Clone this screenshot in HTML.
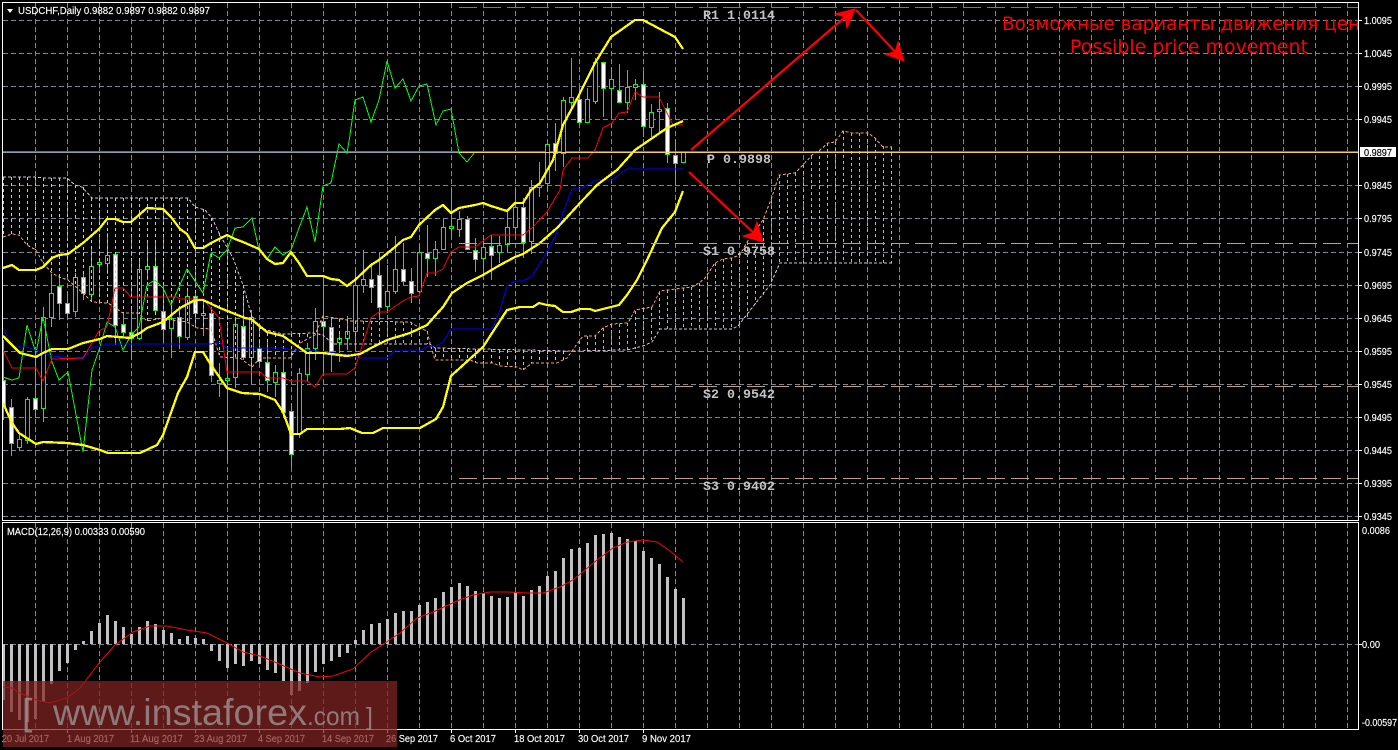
<!DOCTYPE html>
<html lang="en"><head><meta charset="utf-8"><title>USDCHF Daily</title>
<style>
html,body{margin:0;padding:0;background:#000;width:1398px;height:750px;overflow:hidden}
svg{display:block}
text{font-family:"Liberation Sans",sans-serif;font-size:10.5px;fill:#fff;stroke:#fff;stroke-width:.15}
.piv{font-family:"Liberation Mono",monospace;font-size:13.33px;font-weight:bold;fill:#c4c4c4;stroke:none}
.big{font-family:"DejaVu Sans","Noto Sans CJK SC",sans-serif;font-size:18.9px;fill:#f00;stroke:none}
.wm{fill:#9c9292;opacity:.8;stroke:none}
</style></head><body>
<svg width="1398" height="750" viewBox="0 0 1398 750" xmlns="http://www.w3.org/2000/svg">
<defs>
<clipPath id="m"><rect x="3" y="3" width="1355" height="517"/></clipPath>
<clipPath id="t"><rect x="900" y="3" width="458" height="100"/></clipPath>
</defs>
<rect width="1398" height="750" fill="#000"/>

<!-- grid -->
<g stroke="#778899" stroke-width="1" fill="none" stroke-dasharray="5 3" shape-rendering="crispEdges">
<path d="M3 20.5H1358M3 53.5H1358M3 86.5H1358M3 119.5H1358M3 185.5H1358M3 218.5H1358M3 252.5H1358M3 285.5H1358M3 318.5H1358M3 351.5H1358M3 384.5H1358M3 417.5H1358M3 450.5H1358M3 483.5H1358M3 516.5H1358M3 644.5H1358"/>
<path d="M35.5 3V520M67.5 3V520M99.5 3V520M131.5 3V520M163.5 3V520M195.5 3V520M227.5 3V520M259.5 3V520M291.5 3V520M323.5 3V520M355.5 3V520M387.5 3V520M419.5 3V520M451.5 3V520M483.5 3V520M515.5 3V520M547.5 3V520M579.5 3V520M611.5 3V520M643.5 3V520M675.5 3V520M707.5 3V520M739.5 3V520M771.5 3V520M803.5 3V520M835.5 3V520M867.5 3V520M899.5 3V520M931.5 3V520M963.5 3V520M995.5 3V520M1027.5 3V520M1059.5 3V520M1091.5 3V520M1123.5 3V520M1155.5 3V520M1187.5 3V520M1219.5 3V520M1251.5 3V520M1283.5 3V520M1315.5 3V520M1347.5 3V520"/>
<path d="M35.5 523V729M67.5 523V729M99.5 523V729M131.5 523V729M163.5 523V729M195.5 523V729M227.5 523V729M259.5 523V729M291.5 523V729M323.5 523V729M355.5 523V729M387.5 523V729M419.5 523V729M451.5 523V729M483.5 523V729M515.5 523V729M547.5 523V729M579.5 523V729M611.5 523V729M643.5 523V729M675.5 523V729M707.5 523V729M739.5 523V729M771.5 523V729M803.5 523V729M835.5 523V729M867.5 523V729M899.5 523V729M931.5 523V729M963.5 523V729M995.5 523V729M1027.5 523V729M1059.5 523V729M1091.5 523V729M1123.5 523V729M1155.5 523V729M1187.5 523V729M1219.5 523V729M1251.5 523V729M1283.5 523V729M1315.5 523V729M1347.5 523V729"/>
</g>
<path d="M3 151.5H1358" stroke="#5f6f80" shape-rendering="crispEdges"/>
<path d="M3 152.5H459" stroke="#8c9bad" shape-rendering="crispEdges"/>

<g clip-path="url(#m)" shape-rendering="crispEdges">
<!-- wicks -->
<path stroke="#0f0" fill="none" d="M3.5 340V420M11.5 399V456M19.5 433V450M27.5 397V444M35.5 350V418M43.5 307V422M51.5 274V327M59.5 274V320M67.5 291V318M75.5 273V317M83.5 274V300M91.5 249V302M99.5 258V268M107.5 233V274M115.5 254V345M123.5 313V338M131.5 307V360M139.5 258V340M147.5 240V280M155.5 240V312M163.5 297V343M171.5 305V358M179.5 310V349M187.5 290V340M195.5 290V320M203.5 300V336M211.5 307V382M219.5 363V397M227.5 357V462M235.5 317V388M243.5 295V360M251.5 310V384M259.5 340V367M267.5 340V392M275.5 365V397M283.5 352V418M291.5 403V467M299.5 368V438M307.5 343V382M315.5 308V360M323.5 277V372M331.5 317V372M339.5 333V362M347.5 316V350M355.5 272V350M363.5 250V293M371.5 263V303M379.5 253V320M387.5 265V313M395.5 236V294M403.5 243V285M411.5 268V303M419.5 245V294M427.5 225V277M435.5 241V276M443.5 218V250M451.5 188V238M459.5 211V237M467.5 216V250M475.5 238V272M483.5 238V275M491.5 235V280M499.5 236V263M507.5 212V252M515.5 188V235M523.5 198V258M531.5 180V254M539.5 162V197M547.5 144V191M555.5 123V171M563.5 97V167M571.5 58V107M579.5 87V123M587.5 88V123M595.5 58V104M603.5 62V117M611.5 67V118M619.5 64V103M627.5 70V113M635.5 79V100M643.5 72V137M651.5 104V137M659.5 92V133M667.5 103V163M675.5 140V185M683.5 152V162"/>
<!-- up candles -->
<path stroke="#0f0" fill="#000" d="M17.5 439.5h4v8h-4zM25.5 399.5h4v41h-4zM41.5 317.5h4v91h-4zM49.5 293.5h4v24h-4zM73.5 277.5h4v34h-4zM89.5 266.5h4v28h-4zM97.5 262.5h4v2h-4zM105.5 255.5h4v8h-4zM137.5 269.5h4v69h-4zM145.5 266.5h4v3h-4zM169.5 318.5h4v10h-4zM185.5 296.5h4v41h-4zM201.5 313.5h4v2h-4zM217.5 380.5h4v3h-4zM225.5 378.5h4v2h-4zM233.5 324.5h4v53h-4zM249.5 317.5h4v40h-4zM273.5 372.5h4v10h-4zM297.5 373.5h4v60h-4zM305.5 348.5h4v26h-4zM313.5 321.5h4v27h-4zM337.5 338.5h4v4h-4zM345.5 331.5h4v7h-4zM353.5 285.5h4v46h-4zM361.5 279.5h4v6h-4zM385.5 291.5h4v15h-4zM393.5 269.5h4v22h-4zM417.5 252.5h4v39h-4zM433.5 249.5h4v9h-4zM441.5 227.5h4v22h-4zM449.5 226.5h4v2h-4zM457.5 219.5h4v10h-4zM481.5 247.5h4v11h-4zM497.5 245.5h4v7h-4zM505.5 227.5h4v17h-4zM513.5 207.5h4v20h-4zM529.5 187.5h4v54h-4zM537.5 185.5h4v2h-4zM545.5 144.5h4v39h-4zM561.5 100.5h4v53h-4zM569.5 97.5h4v5h-4zM585.5 99.5h4v23h-4zM593.5 62.5h4v39h-4zM609.5 79.5h4v9h-4zM625.5 87.5h4v15h-4zM633.5 84.5h4v3h-4zM649.5 112.5h4v15h-4zM657.5 109.5h4v2h-4zM681.5 152.5h4v10h-4z"/>
<!-- down candles -->
<path stroke="#0f0" fill="#fff" d="M1.5 380.5h4v27h-4zM9.5 407.5h4v36h-4zM33.5 398.5h4v11h-4zM57.5 286.5h4v17h-4zM65.5 303.5h4v10h-4zM81.5 277.5h4v16h-4zM113.5 254.5h4v71h-4zM121.5 324.5h4v8h-4zM129.5 332.5h4v6h-4zM153.5 266.5h4v44h-4zM161.5 311.5h4v18h-4zM177.5 317.5h4v19h-4zM193.5 296.5h4v17h-4zM209.5 313.5h4v62h-4zM241.5 326.5h4v31h-4zM257.5 348.5h4v13h-4zM265.5 362.5h4v18h-4zM281.5 372.5h4v40h-4zM289.5 411.5h4v43h-4zM321.5 321.5h4v5h-4zM329.5 327.5h4v24h-4zM369.5 279.5h4v8h-4zM377.5 275.5h4v32h-4zM401.5 269.5h4v12h-4zM409.5 281.5h4v12h-4zM425.5 253.5h4v5h-4zM465.5 219.5h4v30h-4zM473.5 250.5h4v9h-4zM489.5 246.5h4v9h-4zM521.5 207.5h4v35h-4zM553.5 143.5h4v10h-4zM577.5 99.5h4v23h-4zM601.5 62.5h4v26h-4zM617.5 90.5h4v12h-4zM641.5 84.5h4v42h-4zM665.5 108.5h4v46h-4zM673.5 155.5h4v8h-4z"/>

<!-- cloud verticals -->
<path fill="none" stroke="#d8bfd8" stroke-dasharray="3 3" d="M3.5 177V237M11.5 177V234M19.5 177V235M27.5 177V245M35.5 177V250M43.5 178V263M51.5 178V272M59.5 178V277M67.5 178V279M75.5 185V285M83.5 187V293M91.5 198V302M99.5 198V303M107.5 198V303M115.5 198V308M123.5 198V313M131.5 198V313M139.5 198V314M147.5 198V321M155.5 198V320M163.5 198V318M171.5 198V320M179.5 198V321M187.5 198V322M195.5 206V327M203.5 209V329M211.5 218V329M219.5 233V355M227.5 250V357M235.5 270V358M243.5 285V358M251.5 315V366M259.5 328V358M267.5 333V358M275.5 334V358M283.5 334V358M291.5 334V358M299.5 334V345M307.5 334V339M435.5 348V360M443.5 348V360M451.5 349V360M459.5 349V360M467.5 349V361M475.5 349V363M483.5 349V363M491.5 349V363M499.5 350V366M507.5 350V367M515.5 350V367M523.5 350V370M531.5 350V363M539.5 351V363M547.5 351V363M555.5 351V363M563.5 351V360"/>
<path fill="none" stroke="#f4a460" stroke-dasharray="3 3" d="M323.5 316V336M331.5 317V342M339.5 319V344M347.5 320V344M355.5 321V344M363.5 321V344M371.5 321V344M379.5 322V344M387.5 322V344M395.5 322V344M403.5 322V344M411.5 322V344M419.5 327V344M427.5 331V344M579.5 341V351M587.5 336V351M595.5 336V351M603.5 328V351M611.5 324V351M619.5 324V350M627.5 323V350M635.5 311V349M643.5 309V346M651.5 307V342M659.5 292V330M667.5 290V329M675.5 289V329M683.5 288V329M691.5 287V329M699.5 283V329M707.5 276V329M715.5 263V329M723.5 259V329M731.5 258V329M739.5 255V327M747.5 242V320M755.5 231V304M763.5 220V296M771.5 200V285M779.5 175V265M787.5 174V263M795.5 173V263M803.5 165V263M811.5 156V263M819.5 150V263M827.5 143V263M835.5 142V263M843.5 131V263M851.5 133V263M859.5 133V263M867.5 133V263M875.5 138V263M883.5 146V263M891.5 147V263"/>
<!-- Senkou B -->
<polyline fill="none" stroke="#d8bfd8" stroke-dasharray="3 2" points="3,177 35,177 43,178 67,178 75,185 82,187 92,198 188,198 195,207 205,210 212,218 220,235 233,258 243,285 252,317 259,328 283,334 313,333 323,335 333,344 430,344 435,348 570,351 627,350 643,346 652,342 660,329 732,329 738,326 755,304 770,285 780,263 892,263"/>
<!-- Senkou A -->
<polyline fill="none" stroke="#f4a460" stroke-dasharray="3 2" points="3,237 12,234 19,235 27,245 36,250 43,263 52,273 59,277 68,280 83,293 92,302 108,303 123,313 138,313 147,321 163,318 171,320 187,322 197,328 211,329 220,357 240,358 252,367 260,358 290,358 300,343 315,335 323,316 347,320 350,321 410,322 420,328 427,331 430,343 435,360 470,360 477,363 493,363 500,366 517,367 523,370 532,363 557,363 567,358 580,340 583,336 595,336 603,328 612,324 628,323 635,310 652,307 660,291 683,288 692,287 699,283 705,278 715,263 723,259 732,258 740,255 747,242 763,220 772,197 779,175 795,173 803,165 812,155 820,150 828,143 835,142 843,131 852,133 868,133 875,138 883,147 892,147"/>

<!-- Chikou -->
<polyline fill="none" stroke="#0f0" stroke-width="1" points="3,377 12,380 19,378 27,325 36,353 43,317 52,362 59,380 68,372 83,452 92,370 99,350 107,322 115,327 123,350 131,335 139,327 147,285 155,280 163,288 171,305 187,269 203,293 211,253 219,258 227,250 235,228 243,227 252,218 259,250 267,259 275,247 283,255 291,250 299,228 307,207 315,242 323,186 331,183 339,144 347,153 350,135 355,100 363,97 371,122 379,100 387,61 395,88 403,79 411,101 419,86 427,84 436,125 443,111 451,109 459,153 467,162 475,152"/>
<!-- Kijun -->
<polyline fill="none" stroke="#00f" stroke-width="1" points="3,328 12,347 27,347 43,353 52,356 83,359 92,347 99,347 107,344 211,344 219,342 227,348 283,348 292,350 307,350 327,352 350,355 362,358 387,358 395,351 420,351 428,346 436,346 443,342 451,329 492,329 500,310 507,286 515,281 523,281 532,276 542,260 555,237 563,213 572,189 580,189 597,180 612,180 627,169 683,169"/>
<!-- Tenkan -->
<polyline fill="none" stroke="#f00" stroke-width="1" points="3,350 12,368 36,368 43,381 52,359 83,358 92,343 99,331 107,327 115,288 123,288 131,297 177,297 179,299 203,299 219,318 227,372 260,372 267,378 283,378 291,381 307,381 315,387 323,374 347,374 355,368 363,343 371,318 379,312 387,312 403,301 411,297 419,296 427,273 435,273 443,269 451,252 459,247 475,247 491,235 523,235 533,227 547,212 560,190 563,170 572,158 588,158 595,150 603,128 612,123 619,113 627,112 635,92 643,97 659,97 673,125 683,125"/>
<!-- Bollinger -->
<g fill="none" stroke="#ff0" stroke-width="2.3" stroke-linejoin="round">
<polyline points="3,268 12,265 19,270 36,270 43,267 52,258 59,255 68,254 83,243 99,229 107,219 115,219 123,222 131,222 139,215 147,208 163,209 171,217 180,229 187,234 195,248 203,248 211,243 227,235 235,239 243,242 259,249 267,259 275,264 283,263 291,252 299,263 307,276 323,276 331,279 339,280 347,286 355,280 371,265 379,260 395,247 403,240 411,237 419,225 435,210 443,205 451,213 459,208 475,205 483,203 491,206 507,211 515,203 523,203 531,190 540,183 553,160 563,125 578,97 595,63 611,37 635,20 643,20 675,37 683,49"/>
<polyline points="3,336 12,345 20,353 36,357 43,353 52,349 68,349 83,343 100,339 107,336 130,338 140,333 147,328 163,322 180,308 195,300 203,300 220,308 245,318 251,319 267,332 283,336 300,348 307,353 323,353 347,356 360,354 371,348 387,340 410,333 427,325 443,307 452,293 467,283 483,275 500,265 515,257 523,254 540,243 558,227 580,203 597,185 617,170 635,150 667,128 683,121"/>
<polyline points="3,403 12,423 19,433 36,444 43,442 67,443 83,445 100,450 108,453 140,453 157,445 163,435 178,393 187,377 195,352 203,352 211,365 227,388 242,393 260,394 275,400 283,412 291,434 300,434 307,429 340,429 350,428 362,433 373,433 383,428 420,428 436,419 443,407 451,376 483,347 507,310 520,307 533,307 539,303 547,305 555,306 563,312 571,312 580,309 590,309 595,311 619,305 627,295 637,280 647,260 662,228 675,212 683,191"/>
</g>
</g>

<!-- pivots -->
<g fill="none" shape-rendering="crispEdges">
<path d="M459 152.5H1358" stroke="#f2cf5a"/>
<path d="M459 7.5H1358" stroke="#e8540f" stroke-dasharray="18 6"/>
<path d="M459 243.5H1358M459 386.5H1358M459 478.5H1358" stroke="#c4998c" stroke-dasharray="18 6"/>
</g>
<text class="piv" x="703" y="19">R1 1.0114</text>
<text class="piv" x="707" y="163">P 0.9898</text>
<text class="piv" x="703" y="255">S1 0.9758</text>
<text class="piv" x="703" y="398">S2 0.9542</text>
<text class="piv" x="703" y="490">S3 0.9402</text>

<!-- arrows -->
<g fill="#f00" stroke="#f00">
<path d="M691 150L851 12" stroke-width="2.2" fill="none"/>
<path d="M855 9L835 14L845 17L847 28Z" stroke-width="1"/>
<path d="M856 10L900 57" stroke-width="2.2" fill="none"/>
<path d="M904 61L885 54L895 52L898 42Z" stroke-width="1"/>
<path d="M689 172L759 238" stroke-width="2.2" fill="none"/>
<path d="M763 242L743 236L753 233L757 222Z" stroke-width="1"/>
</g>

<g clip-path="url(#t)">
<text class="big" x="1002" y="30" textLength="358" lengthAdjust="spacingAndGlyphs">Возможные варианты движения цен</text>
<text class="big" x="1070" y="53" textLength="238" lengthAdjust="spacingAndGlyphs">Possible price movement</text>
</g>

<!-- MACD -->
<path stroke="#c0c0c0" stroke-width="3" fill="none" shape-rendering="crispEdges" d="M3.5 644V700M11.5 644V712M19.5 644V720M27.5 644V722M35.5 644V719M43.5 644V702M51.5 644V684M59.5 644V671M67.5 644V663M75.5 644V650M83.5 644V641M91.5 644V631M99.5 644V623M107.5 644V615M115.5 644V621M123.5 644V627M131.5 644V634M139.5 644V627M147.5 644V621M155.5 644V624M163.5 644V630M171.5 644V633M179.5 644V639M187.5 644V636M195.5 644V638M203.5 644V639M211.5 644V651M219.5 644V661M227.5 644V668M235.5 644V664M243.5 644V666M251.5 644V661M259.5 644V664M267.5 644V670M275.5 644V673M283.5 644V681M291.5 644V695M299.5 644V691M307.5 644V683M315.5 644V672M323.5 644V664M331.5 644V661M339.5 644V657M347.5 644V653M355.5 644V640M363.5 644V630M371.5 644V624M379.5 644V623M387.5 644V619M395.5 644V613M403.5 644V611M411.5 644V611M419.5 644V605M427.5 644V602M435.5 644V598M443.5 644V592M451.5 644V587M459.5 644V583M467.5 644V586M475.5 644V591M483.5 644V593M491.5 644V596M499.5 644V598M507.5 644V597M515.5 644V592M523.5 644V596M531.5 644V590M539.5 644V586M547.5 644V576M555.5 644V571M563.5 644V558M571.5 644V549M579.5 644V548M587.5 644V543M595.5 644V535M603.5 644V534M611.5 644V533M619.5 644V537M627.5 644V539M635.5 644V541M643.5 644V551M651.5 644V558M659.5 644V564M667.5 644V577M675.5 644V589M683.5 644V598"/>
<polyline fill="none" stroke="#f00" stroke-width="1" points="3,687 12,688 20,693 36,700 50,703 67,698 80,688 100,662 115,645 133,632 150,626 167,626 187,630 207,633 227,643 243,652 260,656 277,663 300,673 320,677 333,676 353,669 370,653 400,633 417,618 433,612 457,601 473,595 490,592 507,592 527,593 543,593 560,587 573,580 597,560 613,548 627,542 643,540 657,542 670,551 683,562"/>

<!-- frames & ticks -->
<g fill="none" stroke="#fff" shape-rendering="crispEdges">
<rect x="2.5" y="2.5" width="1356" height="518"/>
<rect x="2.5" y="522.5" width="1356" height="207"/>
<path d="M1358 20.5h4M1358 53.5h4M1358 86.5h4M1358 119.5h4M1358 185.5h4M1358 218.5h4M1358 252.5h4M1358 285.5h4M1358 318.5h4M1358 351.5h4M1358 384.5h4M1358 417.5h4M1358 450.5h4M1358 483.5h4M1358 516.5h4M1358 644.5h4"/>
<path d="M67.5 729v4M131.5 729v4M195.5 729v4M259.5 729v4M323.5 729v4M387.5 729v4M451.5 729v4M515.5 729v4M579.5 729v4M643.5 729v4"/>
</g>

<!-- header -->
<path d="M7 9H13L10 13Z" fill="#fff"/>
<text x="18" y="14" textLength="192" lengthAdjust="spacingAndGlyphs">USDCHF,Daily  0.9882 0.9897 0.9882 0.9897</text>
<text x="7" y="535" textLength="138" lengthAdjust="spacingAndGlyphs">MACD(12,26,9) 0.00333 0.00590</text>

<!-- axis -->
<g>
<text x="1364" y="24" textLength="28" lengthAdjust="spacingAndGlyphs">1.0095</text>
<text x="1364" y="57" textLength="28" lengthAdjust="spacingAndGlyphs">1.0045</text>
<text x="1364" y="90" textLength="28" lengthAdjust="spacingAndGlyphs">0.9995</text>
<text x="1364" y="123" textLength="28" lengthAdjust="spacingAndGlyphs">0.9945</text>
<text x="1364" y="189" textLength="28" lengthAdjust="spacingAndGlyphs">0.9845</text>
<text x="1364" y="222" textLength="28" lengthAdjust="spacingAndGlyphs">0.9795</text>
<text x="1364" y="256" textLength="28" lengthAdjust="spacingAndGlyphs">0.9745</text>
<text x="1364" y="289" textLength="28" lengthAdjust="spacingAndGlyphs">0.9695</text>
<text x="1364" y="322" textLength="28" lengthAdjust="spacingAndGlyphs">0.9645</text>
<text x="1364" y="355" textLength="28" lengthAdjust="spacingAndGlyphs">0.9595</text>
<text x="1364" y="388" textLength="28" lengthAdjust="spacingAndGlyphs">0.9545</text>
<text x="1364" y="421" textLength="28" lengthAdjust="spacingAndGlyphs">0.9495</text>
<text x="1364" y="454" textLength="28" lengthAdjust="spacingAndGlyphs">0.9445</text>
<text x="1364" y="487" textLength="28" lengthAdjust="spacingAndGlyphs">0.9395</text>
<text x="1364" y="520" textLength="28" lengthAdjust="spacingAndGlyphs">0.9345</text>
<rect x="1360" y="147" width="36" height="10" fill="#fff" stroke="none"/>
<text x="1364" y="156" textLength="28" lengthAdjust="spacingAndGlyphs" style="fill:#000;stroke:#000">0.9897</text>
<text x="1362" y="534" textLength="28" lengthAdjust="spacingAndGlyphs">0.0086</text>
<text x="1362" y="648" textLength="18" lengthAdjust="spacingAndGlyphs">0.00</text>
<text x="1362" y="726" textLength="35" lengthAdjust="spacingAndGlyphs">-0.00597</text>
</g>

<!-- dates -->
<g>
<text x="2" y="742" textLength="47" lengthAdjust="spacingAndGlyphs">20 Jul 2017</text>
<text x="67" y="742" textLength="47" lengthAdjust="spacingAndGlyphs">1 Aug 2017</text>
<text x="130" y="742" textLength="53" lengthAdjust="spacingAndGlyphs">11 Aug 2017</text>
<text x="194" y="742" textLength="53" lengthAdjust="spacingAndGlyphs">23 Aug 2017</text>
<text x="258" y="742" textLength="47" lengthAdjust="spacingAndGlyphs">4 Sep 2017</text>
<text x="322" y="742" textLength="52" lengthAdjust="spacingAndGlyphs">14 Sep 2017</text>
<text x="386" y="742" textLength="52" lengthAdjust="spacingAndGlyphs">26 Sep 2017</text>
<text x="450" y="742" textLength="46" lengthAdjust="spacingAndGlyphs">6 Oct 2017</text>
<text x="514" y="742" textLength="51" lengthAdjust="spacingAndGlyphs">18 Oct 2017</text>
<text x="578" y="742" textLength="51" lengthAdjust="spacingAndGlyphs">30 Oct 2017</text>
<text x="642" y="742" textLength="49" lengthAdjust="spacingAndGlyphs">9 Nov 2017</text>
</g>

<!-- watermark -->
<rect x="3" y="681" width="394" height="66" fill="rgb(130,35,35)" opacity=".72"/>
<text class="wm" x="22" y="725" style="font-size:37px">[</text>
<text class="wm" x="53" y="725" textLength="254" lengthAdjust="spacingAndGlyphs" style="font-size:37.5px">www.instaforex</text>
<text class="wm" x="307" y="725" textLength="53" lengthAdjust="spacingAndGlyphs" style="font-size:26px">.com</text>
<text class="wm" x="366" y="725" style="font-size:25px">]</text>
</svg>
</body></html>
